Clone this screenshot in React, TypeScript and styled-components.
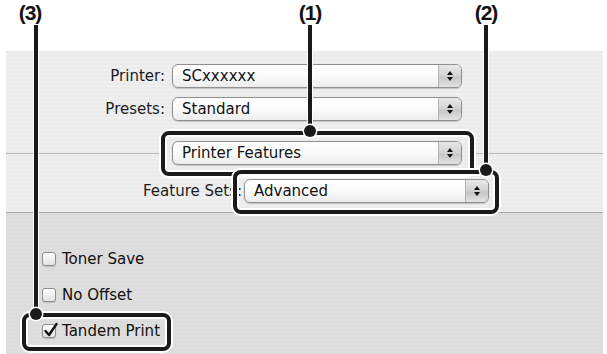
import React from "react";
import styled, { createGlobalStyle } from "styled-components";

const Global = createGlobalStyle`
  html, body { margin: 0; padding: 0; background: #ffffff; }
  body { font-family: "DejaVu Sans", "Liberation Sans", sans-serif; }
`;

const Page = styled.div`
  position: relative;
  width: 607px;
  height: 354px;
  overflow: hidden;
  background: #ffffff;
  display: flex;
  flex-direction: column;
`;

const Header = styled.div`
  height: 51px;
  flex: none;
`;

const Panel = styled.div`
  margin: 0 4px 0 6px;
  flex: 1;
  display: flex;
  flex-direction: column;
  font-size: 15px;
  color: #111;
`;

const Upper = styled.div`
  background: repeating-linear-gradient(
    to bottom,
    #ebebeb 0px,
    #ebebeb 2px,
    #efefef 2px,
    #efefef 4px
  );
  padding: 13px 0 9px 0;
  display: flex;
  flex-direction: column;
  border-bottom: 1px solid #a9a9a9;
`;

const Row = styled.div<{ $label: number; $gap: number; $mt: number }>`
  display: grid;
  grid-template-columns: ${(p) => p.$label}px auto;
  column-gap: ${(p) => p.$gap}px;
  align-items: center;
  margin-top: ${(p) => p.$mt}px;
`;

const Label = styled.span`
  text-align: right;
  color: #1c1c1c;
  white-space: nowrap;
`;

const Popup = styled.div<{ $w: number }>`
  width: ${(p) => p.$w}px;
  height: 24px;
  box-sizing: border-box;
  border: 1px solid #8f8f8f;
  border-radius: 6px;
  background: linear-gradient(to bottom, #ffffff 0%, #fbfbfb 50%, #ececec 100%);
  box-shadow: 0 1px 1px rgba(0, 0, 0, 0.18);
  display: flex;
  align-items: stretch;
  overflow: hidden;
`;

const PopupText = styled.span`
  flex: 1;
  padding-left: 9px;
  line-height: 22px;
  color: #111;
  white-space: nowrap;
`;

const Stepper = styled.span`
  width: 22px;
  border-left: 1px solid #b4b4b4;
  background: linear-gradient(to bottom, #e9e9e9 0%, #d2d2d2 50%, #c6c6c6 55%, #e2e2e2 100%);
  display: flex;
  flex-direction: column;
  align-items: center;
  justify-content: center;
  gap: 2px;
`;

const Tri = styled.span<{ $down?: boolean }>`
  width: 0;
  height: 0;
  border-left: 3px solid transparent;
  border-right: 3px solid transparent;
  ${(p) =>
    p.$down
      ? "border-top: 4px solid #111;"
      : "border-bottom: 4px solid #111;"}
`;

const SepRow = styled.div`
  display: flex;
  align-items: center;
  gap: 6px;
  margin-top: 20px;
`;

const Rule = styled.div<{ $w?: number }>`
  height: 1px;
  background: #b9b9b9;
  ${(p) => (p.$w ? `width: ${p.$w}px; flex: none;` : "flex: 1;")}
`;

const Lower = styled.div`
  flex: 1;
  background: repeating-linear-gradient(
    to bottom,
    #dcdcdc 0px,
    #dcdcdc 2px,
    #dedede 2px,
    #dedede 4px
  );
  padding: 36px 0 0 36px;
  display: flex;
  flex-direction: column;
  gap: 16px;
`;

const CheckRow = styled.label`
  display: flex;
  align-items: center;
  gap: 6px;
  height: 20px;
  color: #111;
`;

const Box = styled.span`
  width: 14px;
  height: 14px;
  box-sizing: border-box;
  border: 1px solid #8c8c8c;
  border-radius: 3px;
  background: linear-gradient(to bottom, #ffffff, #e2e2e2);
  box-shadow: 0 1px 1px rgba(0, 0, 0, 0.15);
  position: relative;
  flex: none;
`;

const Tick = styled.svg`
  position: absolute;
  left: 0px;
  top: -3px;
`;

/* ---------- callout overlay ---------- */

const Num = styled.div<{ $cx: number }>`
  position: absolute;
  top: 1px;
  left: ${(p) => p.$cx - 20}px;
  width: 40px;
  text-align: center;
  font-family: "Liberation Sans", Arial, sans-serif;
  font-weight: bold;
  font-size: 21px;
  letter-spacing: -1px;
  color: #111;
`;

const Lead = styled.div<{ $cx: number; $h: number }>`
  position: absolute;
  top: 25px;
  left: ${(p) => p.$cx - 2}px;
  width: 4px;
  height: ${(p) => p.$h}px;
  background: #1a1a1a;
  box-shadow: 0 0 0 1px #ffffff;
`;

const Dot = styled.div<{ $x: number; $y: number }>`
  position: absolute;
  left: ${(p) => p.$x - 6}px;
  top: ${(p) => p.$y - 6}px;
  width: 12px;
  height: 12px;
  border-radius: 50%;
  background: #1a1a1a;
  box-shadow: 0 0 0 1.5px #ffffff;
`;

const Frame = styled.div<{ $x: number; $y: number; $w: number; $h: number }>`
  position: absolute;
  left: ${(p) => p.$x}px;
  top: ${(p) => p.$y}px;
  width: ${(p) => p.$w}px;
  height: ${(p) => p.$h}px;
  box-sizing: border-box;
  border: 4px solid #1a1a1a;
  border-radius: 8px;
  box-shadow: 0 0 0 2px #ffffff, inset 0 0 0 2px #ffffff;
`;

const Arrows = () => (
  <Stepper>
    <Tri />
    <Tri $down />
  </Stepper>
);

export default function App() {
  return (
    <>
      <Global />
      <Page>
        <Header />
        <Panel>
          <Upper>
            <Row $label={159} $gap={7} $mt={0}>
              <Label>Printer:</Label>
              <Popup $w={290}>
                <PopupText>SCxxxxxx</PopupText>
                <Arrows />
              </Popup>
            </Row>
            <Row $label={159} $gap={7} $mt={9}>
              <Label>Presets:</Label>
              <Popup $w={290}>
                <PopupText>Standard</PopupText>
                <Arrows />
              </Popup>
            </Row>
            <SepRow>
              <Rule $w={160} />
              <Popup $w={290}>
                <PopupText>Printer Features</PopupText>
                <Arrows />
              </Popup>
              <Rule />
            </SepRow>
            <Row $label={236} $gap={2} $mt={14}>
              <Label>Feature Sets:</Label>
              <Popup $w={245}>
                <PopupText>Advanced</PopupText>
                <Arrows />
              </Popup>
            </Row>
          </Upper>
          <Lower>
            <CheckRow>
              <Box />
              Toner Save
            </CheckRow>
            <CheckRow>
              <Box />
              No Offset
            </CheckRow>
            <CheckRow>
              <Box>
                <Tick width="16" height="16" viewBox="0 0 16 16">
                  <path d="M2.5 9 L6 13 L13.5 2" fill="none" stroke="#111" strokeWidth="2.4" strokeLinecap="round" strokeLinejoin="round" />
                </Tick>
              </Box>
              Tandem Print
            </CheckRow>
          </Lower>
        </Panel>

        <Num $cx={30}>(3)</Num>
        <Num $cx={310}>(1)</Num>
        <Num $cx={486}>(2)</Num>

        <Frame $x={161} $y={131} $w={313} $h={45} />
        <Frame $x={233} $y={170} $w={266} $h={44} />
        <Frame $x={22} $y={313} $w={149} $h={38} />

        <Lead $cx={36} $h={289} />
        <Lead $cx={310} $h={106} />
        <Lead $cx={486} $h={145} />

        <Dot $x={36} $y={314} />
        <Dot $x={310} $y={131} />
        <Dot $x={486} $y={170} />
      </Page>
    </>
  );
}
